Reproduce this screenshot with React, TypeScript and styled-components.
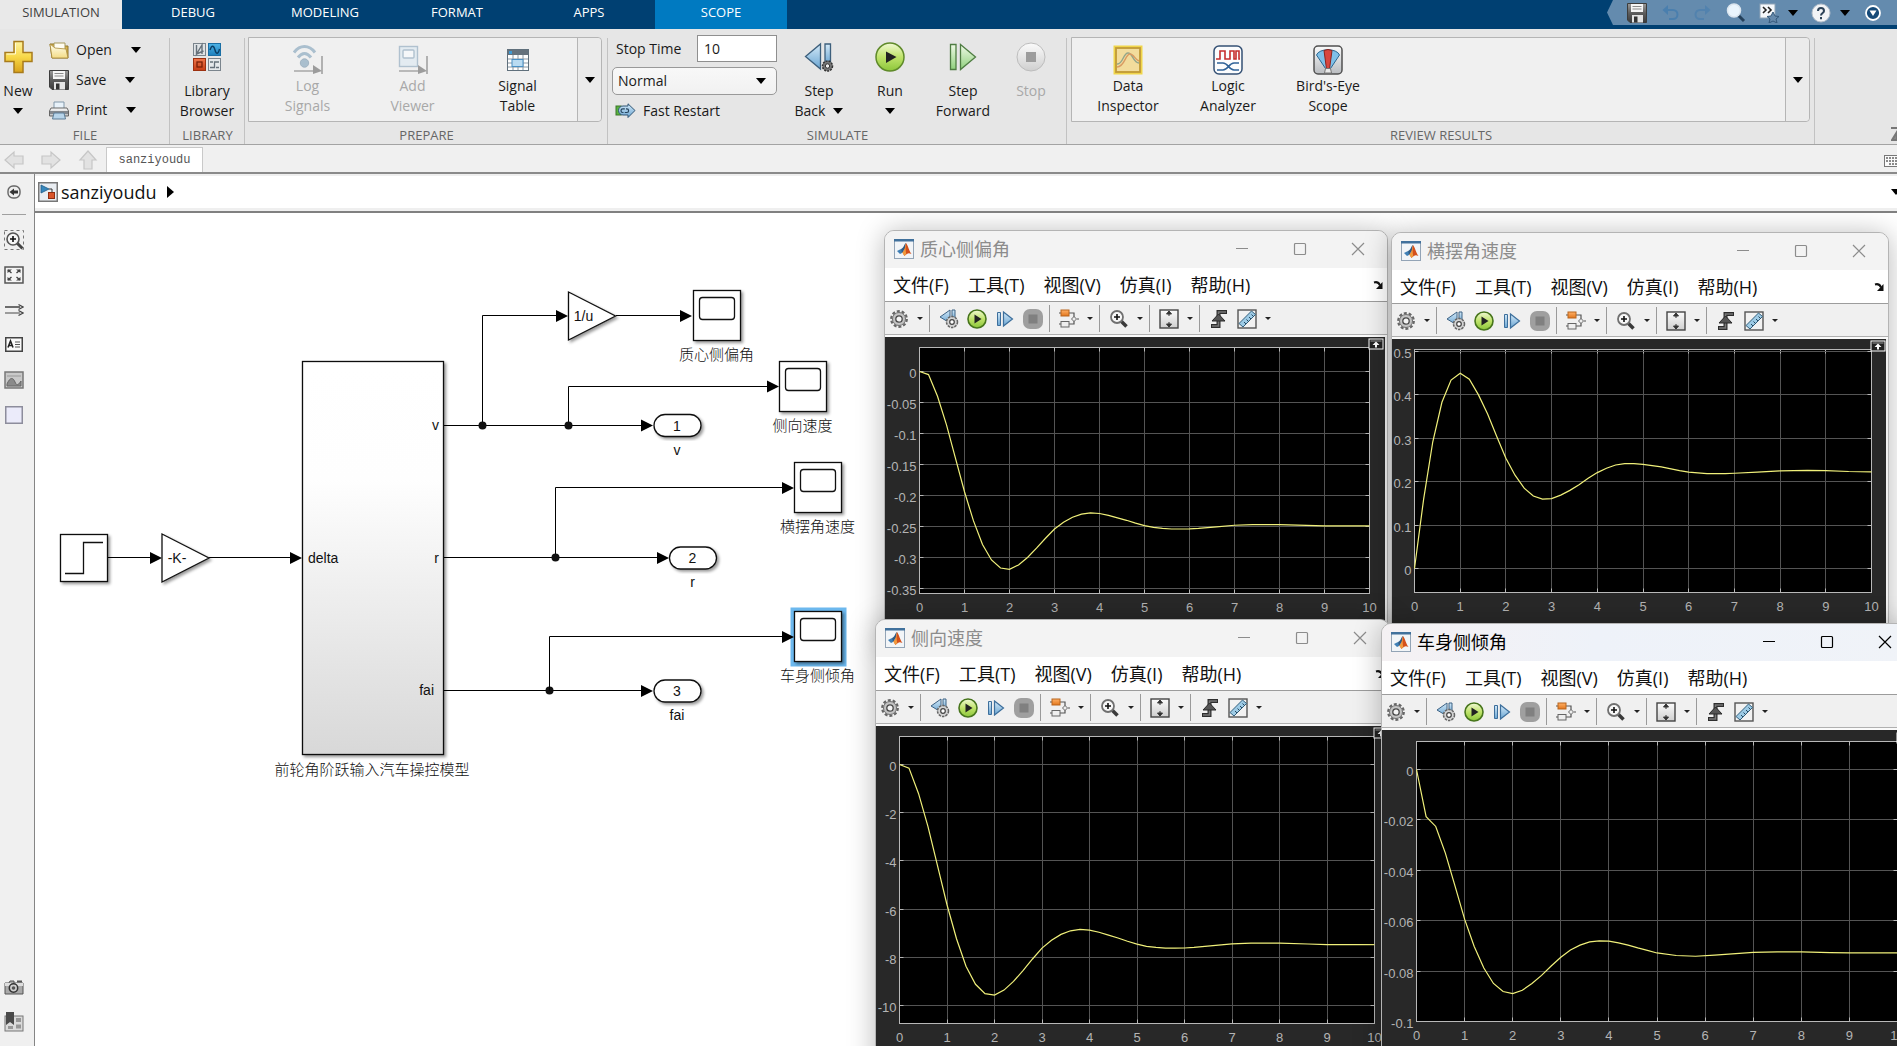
import React from 'react';
import styled, { createGlobalStyle } from 'styled-components';

const uiFont = '"Open Sans", "Noto Sans CJK SC", sans-serif';
const plotFont = '"Liberation Sans", Arial, sans-serif';

const GlobalStyle = createGlobalStyle`
  *, *::before, *::after { box-sizing: border-box; }
  body { margin: 0; background: #fff; overflow: hidden; font-family: ${uiFont}; }
  button, input, select { font: inherit; color: inherit; }
  button { margin: 0; padding: 0; border: 0; background: none; cursor: pointer; }
  svg { display: block; flex: none; }
`;

/* ---------- shared bits ---------- */

const Page = styled.div`
  height: 100vh;
  display: flex;
  flex-direction: column;
  overflow: hidden;
  color: #1a1a1a;
  font-size: 14px;
  line-height: 20px;
`;

const CaretShape = styled.svg`
  width: 10px;
  height: 6px;
  fill: #000;
`;
const Caret = () => (
  <CaretShape viewBox="0 0 10 6" aria-hidden>
    <path d="M0 0h10L5 6z" />
  </CaretShape>
);

const PaintDefs = styled.svg`
  position: absolute;
  width: 0;
  height: 0;
`;

type Stop = [string, string];
const gradients: Record<string, Stop[]> = {
  gold: [['0', '#fff3a0'], ['0.5', '#f7d848'], ['1', '#d9a21b']],
  paper: [['0', '#fffef0'], ['1', '#f3dc86']],
  steel: [['0', '#9a9a9a'], ['0.5', '#5d5d5d'], ['1', '#3b3b3b']],
  silver: [['0', '#fafafa'], ['1', '#b9bcc0']],
  green: [['0', '#f1f9d4'], ['0.5', '#bfe36a'], ['1', '#8cc63a']],
  mint: [['0', '#f0fae8'], ['1', '#8fd07c']],
  sky: [['0', '#d3e9f8'], ['1', '#6aa5d2']],
  azure: [['0', '#4fb4e6'], ['1', '#1b7fbd']],
  rust: [['0', '#f0764a'], ['1', '#c53c14']],
  fog: [['0', '#fbfbfb'], ['1', '#cfcfcf']],
  orange: [['0', '#ffb066'], ['1', '#e2761c']],
  block: [['0', '#ffffff'], ['0.3', '#fefefe'], ['1', '#d8d8d8']],
};
const Paints = () => (
  <PaintDefs aria-hidden>
    <defs>
      {Object.entries(gradients).map(([id, stops]) => (
        <linearGradient id={id} key={id} x1="0" y1="0" x2="0" y2="1">
          {stops.map(([offset, color]) => (
            <stop key={offset} offset={offset} stopColor={color} />
          ))}
        </linearGradient>
      ))}
    </defs>
  </PaintDefs>
);

type IconProps = { w: number; h?: number; children: React.ReactNode };
const Icon = ({ w, h = w, children }: IconProps) => (
  <svg width={w} height={h} viewBox={`0 0 ${w} ${h}`} fill="none" aria-hidden>
    {children}
  </svg>
);

/* ---------- ribbon icons ---------- */

const PlusIcon = () => (
  <Icon w={30} h={34}>
    <path d="M11 1.500h9v11h9v9h-9v11h-9v-11H2v-9h9z" fill="url(#gold)" stroke="#a87b1c" strokeWidth="1.500" />
    <path d="M12.500 3v11h-9" stroke="#fffbd8" />
  </Icon>
);
const FolderIcon = () => (
  <Icon w={20} h={18}>
    <path d="M1 3h5l1 2h12v12H3z" fill="#d8b24a" stroke="#8e742c" />
    <path d="M5 2h11v12H5z" fill="#fffdf2" stroke="#a7995c" />
    <path d="M1 3l5 4 11 1 2 9H3z" fill="url(#paper)" stroke="#a98c3b" strokeWidth=".8" />
  </Icon>
);
const SaveIcon = () => (
  <Icon w={20}>
    <path d="M.5.5h19v19H3l-2.500-2.500z" fill="url(#steel)" stroke="#3c3c3c" />
    <path d="M4 1h12v8H4z" fill="#f5f5f5" />
    <path d="M5.500 3.500h9M5.500 6h9" stroke="#8b8b8b" />
    <path d="M5 12h11v7.500H5z" fill="#e4e4e4" />
    <path d="M7 13.500h3.500v6H7z" fill="#333" />
  </Icon>
);
const PrintIcon = () => (
  <Icon w={20} h={19}>
    <path d="M5 1h10v8H5z" fill="#e8f2fa" stroke="#8298aa" />
    <path d="M2 7h16l1.500 3v5H.5v-5z" fill="url(#silver)" stroke="#666" />
    <path d="M1 10h18v3H1z" fill="#83888e" />
    <path d="M5 12h10l1.500 6h-13z" fill="#b7d4ea" stroke="#5c7d97" />
  </Icon>
);
const LibraryIcon = () => (
  <Icon w={30}>
    <rect x="1.500" y="1.500" width="12" height="12" fill="#dfe3e6" stroke="#7b858d" />
    <path d="M4.500 3v9L10 3v9M4.500 12l7-3" stroke="#66717a" strokeWidth="1.400" />
    <rect x="16.500" y="1.500" width="12" height="12" fill="url(#azure)" stroke="#1a6fa5" />
    <path d="M18 8c2-6 4-4 5 0s3 5 4.500-1" stroke="#0a3f66" strokeWidth="1.400" />
    <rect x="1.500" y="16.500" width="12" height="12" fill="url(#rust)" stroke="#9c3010" />
    <rect x="5" y="20" width="5" height="5" stroke="#7a1f06" strokeWidth="1.300" />
    <rect x="16.500" y="16.500" width="12" height="12" fill="#e6e9eb" stroke="#7b858d" />
    <path d="M18 25.500h4.500v-5.500H27M18 20h3M24 25.500h3" stroke="#66717a" strokeWidth="1.300" />
  </Icon>
);
const LogSignalsIcon = () => (
  <Icon w={30}>
    <g opacity=".6">
      <path d="M1 7.500c6-8 15-8 21 0" stroke="#7d9fb8" strokeWidth="3" />
      <path d="M5 12.500c4-5.500 9-5.500 13 0" stroke="#7d9fb8" strokeWidth="3" />
      <circle cx="11.500" cy="18" r="4.200" fill="#7d9fb8" stroke="#6b8aa2" />
      <path d="M1 26h20" stroke="#777" strokeWidth="1.500" />
      <path d="M20 20l9 6-9 3z" fill="#666" />
      <path d="M29 11v18" stroke="#666" strokeWidth="1.500" />
    </g>
  </Icon>
);
const AddViewerIcon = () => (
  <Icon w={30}>
    <g opacity=".6">
      <rect x="1.500" y="1.500" width="18" height="20" fill="#dce9f3" stroke="#86a3ba" strokeWidth="1.400" />
      <rect x="5" y="5" width="11" height="8" rx="1" fill="#f9fcff" stroke="#86a3ba" strokeWidth="1.400" />
      <path d="M1 26h20" stroke="#777" strokeWidth="1.500" />
      <path d="M20 20l9 6-9 3z" fill="#666" />
      <path d="M29 11v18" stroke="#666" strokeWidth="1.500" />
    </g>
  </Icon>
);
const SignalTableIcon = () => (
  <Icon w={24}>
    <rect x="1.500" y="1.500" width="21" height="21" fill="#fff" stroke="#60707c" />
    <path d="M2 2h20v5H2z" fill="#65727d" />
    <rect x="3" y="3" width="3" height="3" fill="#3f9ad4" />
    <path d="M2 11h20M2 15h20M2 19h20M7 7v15M12 7v15M17 7v15" stroke="#8997a3" />
    <rect x="6" y="11.500" width="11" height="7" fill="#b9dbf2" stroke="#4a90c4" />
  </Icon>
);
const FastRestartIcon = () => (
  <Icon w={21} h={16}>
    <rect x="1" y="3" width="5" height="9" fill="#58b33e" stroke="#3a7428" />
    <path d="M8 3h5V.8L20 7.500l-7 7V12H8a4.500 4.500 0 010-9z" fill="url(#sky)" stroke="#2f5574" />
    <path d="M8.500 9.500h-.7a1.800 1.800 0 010-3.600h2M11 5.900h.8a1.800 1.800 0 010 3.600h-2" stroke="#24445e" strokeWidth="1.200" />
  </Icon>
);
const StepBackIcon = () => (
  <Icon w={30}>
    <path d="M16.500 2v25L1.500 14.500z" fill="url(#sky)" stroke="#3d5f7c" strokeWidth="1.300" />
    <path d="M21 2h5.500v20H21z" fill="url(#sky)" stroke="#3d5f7c" strokeWidth="1.300" />
    <circle cx="23.500" cy="24" r="5" fill="#777" stroke="#333" strokeWidth="1.500" strokeDasharray="2 1" />
    <circle cx="23.500" cy="24" r="2.200" fill="#eee" stroke="#333" />
  </Icon>
);
const RunIcon = () => (
  <Icon w={30}>
    <circle cx="15" cy="15" r="14" fill="url(#green)" stroke="#5f8a2a" strokeWidth="1.500" />
    <path d="M11 9.500l10.500 5.500L11 21z" fill="#222" />
  </Icon>
);
const StepForwardIcon = () => (
  <Icon w={30}>
    <path d="M2.500 2.500H8v25H2.500z" fill="url(#mint)" stroke="#4f7d43" strokeWidth="1.300" />
    <path d="M12.500 2.500l15 12.500-15 12.500z" fill="url(#mint)" stroke="#4f7d43" strokeWidth="1.300" />
  </Icon>
);
const StopIcon = () => (
  <Icon w={30}>
    <circle cx="15" cy="15" r="14" fill="url(#fog)" stroke="#bdbdbd" />
    <rect x="10" y="10" width="10" height="10" fill="#9c9c9c" />
  </Icon>
);
const InspectorIcon = () => (
  <Icon w={30}>
    <rect x="1.500" y="1.500" width="27" height="27" fill="#f2dc9c" stroke="#f0d54a" strokeWidth="2" />
    <rect x="3" y="3" width="24" height="24" stroke="#c09a35" strokeWidth="1.800" />
    <path d="M4 19c6 1 6-11 11-11s5 10 11 10" stroke="#93a58a" strokeWidth="1.400" />
    <path d="M4 22c8 0 8-13 13-13 4 0 5 6 9 7" stroke="#d99b62" strokeWidth="1.400" />
  </Icon>
);
const LogicIcon = () => (
  <Icon w={30}>
    <rect x="1" y="1" width="28" height="28" rx="5" fill="#fbfcfd" stroke="#345074" strokeWidth="1.500" />
    <path d="M3 14h4V6h5v8h5V6h4v8h2V6h3v8h1" stroke="#c62d2d" strokeWidth="1.600" />
    <path d="M4 18h6c5 0 6 7 11 7h5M4 25h6c5 0 6-7 11-7h5" stroke="#2f6298" strokeWidth="1.600" />
  </Icon>
);
const BirdsEyeIcon = () => (
  <Icon w={30}>
    <rect x="1" y="1" width="28" height="28" rx="4" fill="url(#silver)" stroke="#505050" strokeWidth="1.500" />
    <path d="M13.500 25L3.500 10C6 3 24 3 26.500 10l-10 15z" fill="#7fc0e8" stroke="#2b6791" />
    <path d="M13.500 24L11 5.500q4-2 8 0L16.500 24z" fill="#d8473f" stroke="#8b241d" />
    <path d="M11.500 28l1-4.500h5l1 4.500z" fill="#e9e9e9" stroke="#777" />
  </Icon>
);
const MagnifierIcon = () => (
  <Icon w={20}>
    <path d="M12 12l6 6" stroke="#24405a" strokeWidth="3" />
    <ellipse cx="8" cy="7.500" rx="6.500" ry="6.500" fill="#eaf5fd" stroke="#dbe5ee" strokeWidth="1.500" />
  </Icon>
);
const UndoIcon = ({ flip }: { flip?: boolean }) => (
  <Icon w={20}>
    <g transform={flip ? 'translate(20 0) scale(-1 1)' : undefined} opacity={flip ? 0.7 : 1}>
      <path d="M5 7h8a4 4 0 010 9H9" stroke="#4a7fae" strokeWidth="2" />
      <path d="M8 2L2.500 7 8 12z" fill="#4a7fae" />
    </g>
  </Icon>
);
const FavoritesIcon = () => (
  <Icon w={20}>
    <rect x="1" y="1" width="15" height="14" fill="#f4f7fa" stroke="#8ea3b5" />
    <path d="M4 4l3 3-3 3M9 4l3 3-3 3" stroke="#222" strokeWidth="1.600" />
    <path d="M14 9l2 4 4 .5-3 2.500 1 4-4-2-4 2 1-4-3-2.500 4-.5z" fill="#6589ab" stroke="#35597b" />
  </Icon>
);
const HelpIcon = () => (
  <Icon w={20}>
    <circle cx="10" cy="10" r="9" fill="#f2f4f6" stroke="#b3bfca" />
    <path d="M7 8a3 3 0 116 0c0 2-3 2-3 4.500M10 14v2.200" stroke="#2c4257" strokeWidth="2" />
  </Icon>
);
const MinimizeRibbonIcon = () => (
  <Icon w={20}>
    <circle cx="10" cy="10" r="7" fill="#164a78" stroke="#fff" strokeWidth="1.800" />
    <path d="M6.500 7.500h7L10 13z" fill="#fff" />
  </Icon>
);

/* ---------- title tabs ---------- */

const TabBar = styled.nav`
  flex: none;
  display: flex;
  height: 29px;
  background: #004072;
`;
const Tab = styled.button<{ $tone?: 'active' | 'context' }>`
  width: ${(p) => (p.$tone === 'active' ? '122px' : '132px')};
  margin-right: ${(p) => (p.$tone === 'active' ? '5px' : 0)};
  padding-bottom: 5px;
  font-size: 13px;
  color: ${(p) => (p.$tone === 'active' ? '#404040' : '#fff')};
  background: ${(p) => (p.$tone === 'active' ? '#e9e9e9' : p.$tone === 'context' ? '#007ac1' : 'transparent')};
`;
const QuickAccess = styled.div`
  display: flex;
  align-items: center;
  gap: 13px;
  width: 290px;
  height: 25px;
  margin-left: auto;
  padding-left: 20px;
  background: #648bae;
  clip-path: polygon(6px 0, 100% 0, 100% 100%, 6px 100%, 0 50%);
`;
const QuickButton = styled.button`
  display: flex;
  align-items: center;
  gap: 9px;
`;

/* ---------- ribbon ---------- */

const Ribbon = styled.header`
  flex: none;
  display: flex;
  height: 116px;
  background: #e6e6e6;
  border-bottom: 1px solid #a3a3a3;
`;
const Section = styled.section<{ $width?: number }>`
  display: flex;
  flex-direction: column;
  ${(p) => (p.$width ? `flex: none; width: ${p.$width}px;` : 'flex: 1; min-width: 0;')}
  background: linear-gradient(#c2c2c2, #c2c2c2) right bottom / 1px 106px no-repeat;
`;
const SectionBody = styled.div<{ $pad?: string }>`
  flex: 1;
  display: flex;
  padding: ${(p) => p.$pad ?? '0'};
`;
const SectionTitle = styled.h2`
  margin: 0;
  height: 17px;
  font-size: 13px;
  font-weight: 400;
  line-height: 17px;
  text-align: center;
  color: #666;
`;
const BigButton = styled.button<{ $width: number }>`
  width: ${(p) => p.$width}px;
  padding-top: 11px;
  display: flex;
  flex-direction: column;
  align-items: center;
  &:disabled { color: #a8a8a8; }
`;
const BigIcon = styled.span`
  display: flex;
  align-items: center;
  height: 34px;
  margin-bottom: 7px;
`;
const TextLine = styled.span`
  display: flex;
  align-items: center;
  gap: 8px;
  height: 20px;
  white-space: nowrap;
`;
const Rows = styled.div`
  padding: 6px 0 0 13px;
`;
const SmallButton = styled.button`
  display: flex;
  align-items: center;
  height: 30px;
`;
const SmallLabel = styled.span`
  margin: 0 19px 0 7px;
`;
const Gallery = styled.div`
  flex: 1;
  display: flex;
  height: 85px;
  border: 1px solid #b5b5b5;
  border-radius: 0 4px 4px 0;
  background: #f0f0f0;
`;
const GalleryItems = styled.div`
  flex: 1;
  display: flex;
  padding-left: 6px;
`;
const GalleryItem = styled.button<{ $width: number }>`
  width: ${(p) => p.$width}px;
  padding-top: 6px;
  display: flex;
  flex-direction: column;
  align-items: center;
  &:disabled { color: #a8a8a8; }
`;
const GalleryIcon = styled.span`
  display: flex;
  align-items: center;
  height: 31px;
  margin-bottom: 1px;
`;
const GalleryMore = styled.button`
  display: flex;
  align-items: center;
  justify-content: center;
  width: 24px;
  border-left: 1px solid #b5b5b5;
  background: #ebebeb;
  border-radius: 0 4px 4px 0;
`;
const SimulateForm = styled.div`
  display: flex;
  flex-direction: column;
  gap: 5px;
  width: 165px;
  margin-right: 7px;
  padding-top: 6px;
`;
const StopTimeRow = styled.label`
  display: flex;
  align-items: center;
  justify-content: space-between;
  padding-left: 4px;
`;
const StopTimeInput = styled.input`
  width: 80px;
  height: 27px;
  padding: 0 6px;
  border: 1px solid #8f8f8f;
  background: #fff;
`;
const ModeBox = styled.div`
  display: grid;
  align-items: center;
  & > * { grid-area: 1 / 1; }
  & > svg { justify-self: end; margin-right: 11px; pointer-events: none; }
`;
const ModeSelect = styled.select`
  appearance: none;
  width: 100%;
  height: 28px;
  padding: 0 5px;
  border: 1px solid #999;
  border-radius: 5px;
  background: linear-gradient(#f8f8f8, #f1f1f1);
`;
const FastRestart = styled.button`
  display: flex;
  align-items: center;
  gap: 7px;
  height: 22px;
  padding-left: 3px;
`;
const RibbonEnd = styled.div`
  flex: none;
  display: flex;
  align-items: flex-end;
  justify-content: flex-end;
  width: 82px;
  padding-bottom: 2px;
  overflow: hidden;
`;

/* ---------- document bar ---------- */

const DocumentBar = styled.div`
  flex: none;
  display: flex;
  align-items: flex-end;
  height: 29px;
  background: #f0f0f0;
  border-bottom: 2px solid #8a8a8a;
`;
const NavArrows = styled.div`
  display: flex;
  gap: 17px;
  align-items: center;
  width: 106px;
  height: 24px;
  padding-left: 4px;
`;
const DocumentTab = styled.button`
  width: 97px;
  height: 25px;
  border: 1px solid #c9c9c9;
  border-bottom: 0;
  background: #fff;
  font-family: "Liberation Mono", monospace;
  font-size: 12px;
  color: #555;
`;
const KeyboardButton = styled.button`
  width: 13px;
  height: 22px;
  margin-left: auto;
  overflow: hidden;
`;

/* ---------- workspace ---------- */

const Workspace = styled.div`
  flex: 1;
  display: flex;
  min-height: 0;
`;
const Palette = styled.aside`
  flex: none;
  display: flex;
  flex-direction: column;
  align-items: flex-start;
  width: 35px;
  padding-bottom: 7px;
  background: #f0f0f0;
  border-right: 1px solid #858585;
`;
const PaletteButton = styled.button`
  display: flex;
  align-items: center;
  justify-content: center;
  width: 28px;
  height: 35px;
`;
const PaletteRule = styled.hr`
  width: 24px;
  margin: 5px 0 7px 2px;
  border: 0;
  border-top: 1px solid #a0a0a0;
`;
const PaletteSpace = styled.div`
  flex: 1;
`;
const Editor = styled.main`
  flex: 1;
  min-width: 0;
  display: flex;
  flex-direction: column;
`;
const Breadcrumb = styled.div`
  flex: none;
  display: flex;
  align-items: center;
  height: 39px;
  padding: 0 0 4px 3px;
  border-top: 2px solid #efefef;
  border-bottom: 2px solid #808080;
  box-shadow: inset 0 -3px #efefef;
  background: #fff;
`;
const Crumb = styled.button`
  margin: 0 10px 0 3px;
  font-size: 18px;
  line-height: 24px;
  color: #111;
`;
const CrumbMenu = styled.button`
  width: 6px;
  margin-left: auto;
  overflow: hidden;
`;
const Canvas = styled.div`
  flex: 1;
  position: relative;
  overflow: hidden;
  background: #fff;
`;
const Diagram = styled.svg`
  width: 100%;
  height: 100%;
  font-family: ${plotFont};
  font-size: 14px;
  text-anchor: middle;
  fill: #111;
`;

/* ---------- block diagram ---------- */

const BLOCK = { fill: '#fff', stroke: '#111', strokeWidth: 1.3 };

const ScopeBlock = ({ x, y, name, selected }: { x: number; y: number; name: string; selected?: boolean }) => (
  <g>
    {selected && <rect x={x - 4} y={y - 4} width="56" height="59" fill="#6cb8ee" />}
    <rect x={x} y={y} width="47" height="50" {...BLOCK} filter="url(#lift)" />
    <rect x={x + 6} y={y + 7} width="35" height="22" rx="3" {...BLOCK} />
    <text x={x + 23} y={y + 69} fontSize="15" fontFamily='"Noto Sans CJK SC", sans-serif' fontWeight="300">
      {name}
    </text>
  </g>
);
const OutPort = ({ x, y, n, name }: { x: number; y: number; n: number; name: string }) => (
  <g>
    <rect x={x} y={y - 11} width="47" height="22" rx="11" {...BLOCK} filter="url(#lift)" />
    <text x={x + 23} y={y + 5}>{n}</text>
    <text x={x + 23} y={y + 29}>{name}</text>
  </g>
);
const Gain = ({ x, y, value }: { x: number; y: number; value: string }) => (
  <g>
    <path d={`M${x} ${y - 24}l47 24l-47 24z`} {...BLOCK} filter="url(#lift)" />
    <text x={x + 15} y={y + 5}>{value}</text>
  </g>
);
const Wire = ({ d, tip }: { d: string; tip: [number, number] }) => (
  <g>
    <path d={d} fill="none" stroke="#000" />
    <path d={`M${tip[0]} ${tip[1]}l-12 -6v12z`} fill="#000" />
  </g>
);

const Model = () => (
  <Diagram aria-label="sanziyoudu">
    <defs>
      <filter id="lift" x="-10%" y="-10%" width="130%" height="130%">
        <feDropShadow dx="2" dy="2" stdDeviation="1.500" floodOpacity=".4" />
      </filter>
    </defs>
    <g transform="translate(-35 -213)">
      <Wire d="M108 557.500H152" tip={[162, 558]} />
      <Wire d="M209 557.500H292" tip={[302, 558]} />
      <Wire d="M444 425.500H643" tip={[653, 425.5]} />
      <Wire d="M482.500 425.500V315.500H558" tip={[568, 316]} />
      <Wire d="M616 315.500H683" tip={[692, 316]} />
      <Wire d="M568.500 425.500V386.500H768" tip={[779, 386.5]} />
      <Wire d="M444 557.500H659" tip={[669, 558]} />
      <Wire d="M555.500 557.500V487.500H784" tip={[794, 488]} />
      <Wire d="M444 690.500H643" tip={[653, 691]} />
      <circle cx="482.500" cy="425.500" r="4" />
      <circle cx="568.500" cy="425.500" r="4" />
      <circle cx="555.500" cy="557.500" r="4" />
      <circle cx="549.500" cy="690.500" r="4" />

      <rect x="60.500" y="534.500" width="47" height="47" {...BLOCK} filter="url(#lift)" />
      <path d="M65 573.500H83.500V542.500H103" fill="none" stroke="#111" strokeWidth="1.300" />
      <Gain x={162} y={558} value="-K-" />
      <Gain x={568.5} y={316} value="1/u" />

      <rect x="302.500" y="361.500" width="141" height="393" {...BLOCK} fill="url(#block)" filter="url(#lift)" />
      <text x="308" y="563" textAnchor="start">delta</text>
      <text x="439" y="430" textAnchor="end">v</text>
      <text x="439" y="563" textAnchor="end">r</text>
      <text x="434" y="695" textAnchor="end">fai</text>
      <text x="372" y="775" fontSize="15" fontFamily='"Noto Sans CJK SC", sans-serif' fontWeight="300">
        前轮角阶跃输入汽车操控模型
      </text>

      <ScopeBlock x={693.5} y={290.5} name="质心侧偏角" />
      <ScopeBlock x={779.5} y={361.5} name="侧向速度" />
      <ScopeBlock x={794.5} y={462.5} name="横摆角速度" />
      <ScopeBlock x={794.5} y={611.5} name="车身侧倾角" selected />
      <Wire d="M549.500 690.500V636.500H784" tip={[794, 637]} />
      <OutPort x={654} y={425.5} n={1} name="v" />
      <OutPort x={669.5} y={558} n={2} name="r" />
      <OutPort x={654} y={691} n={3} name="fai" />
    </g>
  </Diagram>
);

/* ---------- scope windows ---------- */

const Frame = styled.article<{ $x: number; $y: number; $w: number; $h: number }>`
  position: absolute;
  left: ${(p) => p.$x}px;
  top: ${(p) => p.$y}px;
  width: ${(p) => p.$w}px;
  height: ${(p) => p.$h}px;
  display: flex;
  flex-direction: column;
  overflow: hidden;
  border: 1px solid #b4b4b4;
  border-radius: 10px 10px 0 0;
  background: #f0f0f0;
  box-shadow: 0 2px 28px rgba(0, 0, 0, 0.28);
`;
const TitleBar = styled.header<{ $active?: boolean }>`
  flex: none;
  display: flex;
  align-items: center;
  height: 37px;
  padding: 0 0 2px 9px;
  color: ${(p) => (p.$active ? '#000' : '#8c8c8c')};
  background: ${(p) => (p.$active ? 'linear-gradient(90deg, #f5f1f3, #eef2f9 40%, #f0f3f8)' : '#f3f3f3')};
`;
const TitleText = styled.h3`
  flex: 1;
  margin: 0 0 0 6px;
  font-size: 18px;
  font-weight: 400;
`;
const WindowButton = styled.button`
  display: flex;
  align-items: center;
  justify-content: center;
  width: 58px;
  height: 35px;
`;
const MenuBar = styled.nav`
  flex: none;
  display: flex;
  align-items: center;
  gap: 19px;
  height: 33px;
  padding: 0 4px 0 8px;
  background: #fff;
  font-size: 18px;
  color: #111;
`;
const MenuItem = styled.button`
  white-space: nowrap;
`;
const DockButton = styled.button`
  margin-left: auto;
`;
const ScopeTools = styled.div`
  flex: none;
  display: flex;
  align-items: center;
  height: 36px;
  border-top: 1px solid #9c9c9c;
  border-bottom: 2px solid #fafafa;
  box-shadow: inset 0 -1px #b0b0b0;
  background: #f0f0f0;
`;
const ToolButton = styled.button`
  display: flex;
  align-items: center;
  justify-content: center;
  width: 28px;
  height: 28px;
`;
const ToolCaret = styled.button`
  display: flex;
  align-items: center;
  justify-content: center;
  width: 14px;
  height: 28px;
`;
const ToolRule = styled.span`
  width: 1px;
  height: 27px;
  margin: 0 5px 0 2px;
  background: #9a9a9a;
`;
const PlotArea = styled.div`
  flex: 1;
  min-height: 0;
  margin-right: 2px;
  background: #282828;
`;
const Plot = styled.svg`
  width: 100%;
  height: 100%;
  overflow: hidden;
  font-family: ${plotFont};
  font-size: 13px;
  fill: #b4b4b4;
`;

const MatlabIcon = () => (
  <Icon w={20}>
    <rect x=".5" y=".5" width="19" height="19" fill="#f2f5f8" stroke="#93a4b6" />
    <path d="M0 0h20v2.500H0z" fill="#41719c" />
    <path d="M3 12l4-2 3 3-4 2z" fill="#3f7fb5" />
    <path d="M7 10c3-1 3-5 5-6l-1 6-3 3.500z" fill="#2e5b85" />
    <path d="M12 4c2 2 3 8 5.500 11-3-1.500-4-1-7 2l-2-3.500C11 12 11 7 12 4z" fill="#d4501b" />
    <path d="M12 4c-.5 5-.5 8 .3 11l-2 2-2-3.500C11 12 11 7 12 4z" fill="#f09a3e" />
  </Icon>
);
const GearIcon = () => (
  <Icon w={20}>
    <circle cx="10" cy="10" r="7.800" stroke="#666" strokeWidth="2.200" strokeDasharray="3 1.900" />
    <circle cx="10" cy="10" r="6.500" fill="#c4c4c4" stroke="#6d6d6d" />
    <circle cx="10" cy="10" r="3.200" fill="#f4f4f4" stroke="#4a4a4a" strokeWidth="1.300" />
  </Icon>
);
const BackGearIcon = () => (
  <Icon w={20}>
    <path d="M11 1v13L1 8z" fill="url(#sky)" stroke="#3d6284" />
    <path d="M13 1h3v10h-3z" fill="url(#sky)" stroke="#3d6284" />
    <circle cx="13" cy="13" r="5.500" fill="#d4d4d4" stroke="#666" strokeWidth="1.500" strokeDasharray="2.500 1" />
    <circle cx="13" cy="13" r="2.300" fill="#fff" stroke="#444" strokeWidth="1.200" />
  </Icon>
);
const PlayIcon = () => (
  <Icon w={20}>
    <circle cx="10" cy="10" r="9" fill="url(#green)" stroke="#47751c" strokeWidth="1.600" />
    <path d="M7.500 5.500l7 4.500-7 4.500z" fill="#222" />
  </Icon>
);
const ForwardIcon = () => (
  <Icon w={18}>
    <path d="M1.500 2.500h3v13h-3z" fill="url(#sky)" stroke="#3d6f9c" />
    <path d="M7.500 2l9 7-9 7z" fill="url(#sky)" stroke="#3d6f9c" strokeWidth="1.200" />
  </Icon>
);
const HaltIcon = () => (
  <Icon w={20}>
    <rect width="20" height="20" rx="7" fill="#9f9f9f" />
    <rect x="5.500" y="5.500" width="9" height="9" fill="#808080" />
  </Icon>
);
const BlocksIcon = () => (
  <Icon w={20}>
    <path d="M0 4h2M10 4h5v4M0 15h2M10 15h5v-3M18 10h2" stroke="#555" strokeWidth="1.200" />
    <rect x="2" y="1" width="8" height="6" fill="url(#orange)" stroke="#b8641c" />
    <rect x="2" y="12.500" width="8" height="5.500" fill="#eee" stroke="#666" />
    <path d="M15 7.500l2.500 2.500-2.500 2.500-2.500-2.500z" fill="#eee" stroke="#666" />
  </Icon>
);
const ZoomPlusIcon = () => (
  <Icon w={20}>
    <path d="M12 12l5.500 5.500" stroke="#3a3a3a" strokeWidth="3.500" />
    <circle cx="8" cy="8" r="6" fill="#f7f7f7" stroke="#707070" strokeWidth="1.800" />
    <path d="M8 5v6M5 8h6" stroke="#111" strokeWidth="1.600" />
  </Icon>
);
const FitAxesIcon = () => (
  <Icon w={20}>
    <rect x="1" y="1" width="18" height="18" fill="url(#fog)" stroke="#444" strokeWidth="1.400" />
    <path d="M10 2l2.500 3h-5zM10 18l2.500-3h-5zM10 5v2M10 13v2" fill="#333" stroke="#333" />
  </Icon>
);
const TriggerIcon = () => (
  <Icon w={20}>
    <path d="M2 17h7.500V3H18" stroke="#2e2e2e" strokeWidth="4" />
    <path d="M3 17h6.500V3H17" stroke="#777" strokeWidth="1.600" />
    <path d="M9.500 5l6.500 7H3z" fill="#555" stroke="#2a2a2a" />
  </Icon>
);
const MeasureIcon = () => (
  <Icon w={20}>
    <rect x="1" y="1" width="18" height="18" fill="#f2f2f2" stroke="#555" strokeWidth="1.400" />
    <path d="M2 14.500L14.500 2 18.500 5.500 6 18z" fill="#9dcbe6" stroke="#335f7c" />
    <path d="M7 13l2 2M9.500 10.500l2 2M12 8l2 2M14.500 5.500l2 2" stroke="#274a61" />
  </Icon>
);
const SmallCaret = () => (
  <Icon w={6} h={3}>
    <path d="M0 0h6L3 3z" fill="#222" />
  </Icon>
);

type Point = [number, number];
const sideslip: Point[] = [
  [0, 0], [0.2, -0.005], [0.4, -0.04], [0.6, -0.086], [0.8, -0.14], [1, -0.194], [1.2, -0.241], [1.4, -0.279],
  [1.6, -0.304], [1.8, -0.317], [2, -0.319], [2.2, -0.312], [2.4, -0.3], [2.6, -0.285], [2.8, -0.269], [3, -0.254],
  [3.2, -0.243], [3.4, -0.235], [3.6, -0.23], [3.8, -0.228], [4, -0.229], [4.2, -0.232], [4.4, -0.236], [4.6, -0.24],
  [4.8, -0.2445], [5, -0.2485], [5.2, -0.2515], [5.4, -0.253], [5.6, -0.254], [5.8, -0.254], [6, -0.2538],
  [6.2, -0.253], [6.6, -0.2505], [7, -0.248], [7.4, -0.247], [8, -0.247], [8.6, -0.2483], [9, -0.249], [10, -0.249],
];
const lateral: Point[] = sideslip.map(([t, v]) => [t, v * 30]);
const yaw: Point[] = [
  [0, 0], [0.2, 0.16], [0.4, 0.292], [0.6, 0.383], [0.8, 0.434], [1, 0.45], [1.2, 0.436], [1.4, 0.4], [1.6, 0.356],
  [1.8, 0.304], [2, 0.254], [2.2, 0.215], [2.4, 0.185], [2.6, 0.167], [2.8, 0.16], [3, 0.161], [3.2, 0.169],
  [3.4, 0.18], [3.6, 0.193], [3.8, 0.208], [4, 0.221], [4.2, 0.231], [4.4, 0.2385], [4.6, 0.2417], [4.8, 0.2417],
  [5, 0.24], [5.4, 0.234], [5.8, 0.2256], [6, 0.222], [6.4, 0.2187], [6.8, 0.2185], [7, 0.2195], [7.5, 0.222],
  [8, 0.2249], [8.6, 0.226], [9, 0.2256], [9.5, 0.2235], [10, 0.2226],
];
const roll: Point[] = [
  [0, 0], [0.2, -0.0187], [0.4, -0.0226], [0.6, -0.0332], [0.8, -0.0462], [1, -0.0594], [1.2, -0.0702],
  [1.4, -0.0788], [1.6, -0.0849], [1.8, -0.0881], [2, -0.0889], [2.2, -0.0876], [2.4, -0.0849], [2.6, -0.0817],
  [2.8, -0.078], [3, -0.0745], [3.2, -0.0716], [3.4, -0.0697], [3.6, -0.0684], [3.8, -0.068], [4, -0.0681],
  [4.2, -0.0688], [4.4, -0.0697], [4.6, -0.0708], [4.8, -0.0718], [5, -0.0728], [5.4, -0.0738], [5.8, -0.0741],
  [6.2, -0.0737], [7, -0.0726], [7.5, -0.0724], [8, -0.0724], [8.6, -0.0727], [9, -0.0728], [10, -0.0728],
];

type PlotSpec = {
  left: number;
  top: number;
  bottom: number;
  right: number;
  zeroY: number;
  stepY: number;
  unit: number;
  ticks: string[];
  data: Point[];
};

const ScopePlot = ({ left, top, right, bottom, zeroY, stepY, unit, ticks, data }: PlotSpec) => {
  const px = (t: number) => left + ((right - left) * t) / 10;
  const py = (v: number) => zeroY - (v / unit) * stepY;
  const snap = (n: number) => Math.round(n - 0.5) + 0.5;
  const times = Array.from({ length: 11 }, (_, i) => i);
  return (
    <Plot>
      <rect x={left} y={top} width={right - left} height={bottom - top} fill="#000" />
      {times.slice(1, 10).map((t) => (
        <g key={t}>
          <path d={`M${snap(px(t))} ${top}V${bottom}`} stroke="#545454" />
          <path d={`M${snap(px(t))} ${top}v4M${snap(px(t))} ${bottom}v-4`} stroke="#b8b8b8" />
        </g>
      ))}
      {ticks.map((label) => {
        const y = snap(py(Number(label)));
        return (
          <g key={label}>
            <path d={`M${left} ${y}H${right}`} stroke="#545454" />
            <path d={`M${left} ${y}h4M${right} ${y}h-4`} stroke="#b8b8b8" />
            <text x={left - 3} y={y + 6} textAnchor="end">{label}</text>
          </g>
        );
      })}
      <rect x={left} y={top} width={right - left} height={bottom - top} fill="none" stroke="#b8b8b8" />
      {times.map((t) => (
        <text key={t} x={px(t)} y={bottom + 18} textAnchor="middle">{t}</text>
      ))}
      <polyline points={data.map(([t, v]) => `${px(t)},${py(v)}`).join(' ')} fill="none" stroke="#f0f07a" strokeWidth="1.200" />
      <g transform={`translate(${right - 1} ${top - 9})`}>
        <rect x=".5" y=".5" width="14" height="10" fill="#222" stroke="#fff" />
        <path d="M2 2.500h11" stroke="#999" />
        <path d="M7.500 3l3.500 3.500H8.500V9h-2V6.500H4z" fill="#fff" />
      </g>
    </Plot>
  );
};

const menus = ['文件(F)', '工具(T)', '视图(V)', '仿真(I)', '帮助(H)'];

type WindowProps = { title: string; x: number; y: number; w: number; h: number; active?: boolean; plot: PlotSpec };
const ScopeWindow = ({ title, x, y, w, h, active, plot }: WindowProps) => (
  <Frame $x={x} $y={y} $w={w} $h={h}>
    <TitleBar $active={active}>
      <MatlabIcon />
      <TitleText>{title}</TitleText>
      <WindowButton aria-label="最小化">
        <Icon w={14}><path d="M1 6.500h12" stroke="currentColor" /></Icon>
      </WindowButton>
      <WindowButton aria-label="最大化">
        <Icon w={14}><rect x="1.500" y="1.500" width="11" height="11" rx="1" stroke="currentColor" strokeWidth="1.200" /></Icon>
      </WindowButton>
      <WindowButton aria-label="关闭">
        <Icon w={14}><path d="M1 1l12 12M13 1L1 13" stroke="currentColor" strokeWidth="1.200" /></Icon>
      </WindowButton>
    </TitleBar>
    <MenuBar>
      {menus.map((m) => <MenuItem key={m}>{m}</MenuItem>)}
      <DockButton aria-label="停靠">
        <Icon w={10}><path d="M1 2.500c3-1 5 0 6 3" stroke="#111" strokeWidth="2" /><path d="M9.500 2v7H3z" fill="#111" /></Icon>
      </DockButton>
    </MenuBar>
    <ScopeTools>
      <ToolButton aria-label="设置"><GearIcon /></ToolButton>
      <ToolCaret aria-label="更多设置"><SmallCaret /></ToolCaret>
      <ToolRule />
      <ToolButton aria-label="步退"><BackGearIcon /></ToolButton>
      <ToolButton aria-label="运行"><PlayIcon /></ToolButton>
      <ToolButton aria-label="步进"><ForwardIcon /></ToolButton>
      <ToolButton aria-label="停止"><HaltIcon /></ToolButton>
      <ToolRule />
      <ToolButton aria-label="信号选择"><BlocksIcon /></ToolButton>
      <ToolCaret aria-label="更多信号"><SmallCaret /></ToolCaret>
      <ToolRule />
      <ToolButton aria-label="缩放"><ZoomPlusIcon /></ToolButton>
      <ToolCaret aria-label="更多缩放"><SmallCaret /></ToolCaret>
      <ToolRule />
      <ToolButton aria-label="适应坐标轴"><FitAxesIcon /></ToolButton>
      <ToolCaret aria-label="更多适应"><SmallCaret /></ToolCaret>
      <ToolRule />
      <ToolButton aria-label="触发器"><TriggerIcon /></ToolButton>
      <ToolButton aria-label="测量"><MeasureIcon /></ToolButton>
      <ToolCaret aria-label="更多测量"><SmallCaret /></ToolCaret>
    </ScopeTools>
    <PlotArea>
      <ScopePlot {...plot} />
    </PlotArea>
  </Frame>
);

const windows: WindowProps[] = [
  {
    title: '质心侧偏角', x: 849, y: 17, w: 504, h: 420,
    plot: {
      left: 34.5, right: 484.5, top: 10.5, bottom: 256.5, zeroY: 34.5, stepY: 31, unit: 0.05, data: sideslip,
      ticks: ['0', '-0.05', '-0.1', '-0.15', '-0.2', '-0.25', '-0.3', '-0.35'],
    },
  },
  {
    title: '横摆角速度', x: 1356, y: 19, w: 498, h: 400,
    plot: {
      left: 22.5, right: 479.5, top: 10.5, bottom: 253.5, zeroY: 229.5, stepY: 43.4, unit: 0.1, data: yaw,
      ticks: ['0.5', '0.4', '0.3', '0.2', '0.1', '0'],
    },
  },
  {
    title: '侧向速度', x: 840, y: 406, w: 515, h: 480,
    plot: {
      left: 23.5, right: 498.5, top: 10.5, bottom: 297.5, zeroY: 38.5, stepY: 48.2, unit: 2, data: lateral,
      ticks: ['0', '-2', '-4', '-6', '-8', '-10'],
    },
  },
  {
    title: '车身侧倾角', x: 1346, y: 410, w: 534, h: 480, active: true,
    plot: {
      left: 34.5, right: 515.5, top: 11.5, bottom: 291.5, zeroY: 39.5, stepY: 50.4, unit: 0.02, data: roll,
      ticks: ['0', '-0.02', '-0.04', '-0.06', '-0.08', '-0.1'],
    },
  },
];

/* ---------- palette and navigation icons ---------- */

const NavArrow = ({ turn }: { turn: number }) => (
  <Icon w={20}>
    <path
      d="M1 10L10 2v4h9v8h-9v4z"
      fill="#e2e2e2"
      stroke="#c6c6c6"
      strokeWidth="1.200"
      transform={`rotate(${turn} 10 10)`}
    />
  </Icon>
);
const HideIcon = () => (
  <Icon w={14}>
    <rect x="1" y="1" width="12" height="12" rx="5" fill="#eee" stroke="#666" strokeWidth="1.400" />
    <path d="M2.500 7L7 3.500v2h4v3H7v2z" fill="#333" />
  </Icon>
);
const ZoomRegionIcon = () => (
  <Icon w={20}>
    <rect x=".5" y=".5" width="19" height="19" stroke="#777" strokeDasharray="3 3" />
    <path d="M13 13l5.500 5.500" stroke="#444" strokeWidth="3" />
    <circle cx="9" cy="9" r="6" fill="#f6f6f6" stroke="#555" strokeWidth="1.600" />
    <path d="M9 6v6M6 9h6" stroke="#111" strokeWidth="1.600" />
  </Icon>
);
const FitIcon = () => (
  <Icon w={20} h={18}>
    <rect x="1" y="1" width="18" height="16" fill="#f4f4f4" stroke="#555" strokeWidth="1.500" />
    <path d="M3.500 7V3.500H8zM16.500 7V3.500H12zM3.500 11v3.500H8zM16.500 11v3.500H12z" fill="#444" />
    <path d="M4 4l3.500 3M16 4l-3.500 3M4 14l3.500-3M16 14l-3.500-3" stroke="#444" strokeWidth="1.400" />
  </Icon>
);
const SignalsIcon = () => (
  <Icon w={20} h={14}>
    <path d="M1 4h15" stroke="#333" strokeWidth="1.400" />
    <path d="M1 10h15" stroke="#777" strokeWidth="1.400" />
    <path d="M14.500 1.500L19 4l-4.500 2.500M14.500 7.500L19 10l-4.500 2.500" stroke="#444" strokeWidth="1.300" />
  </Icon>
);
const AnnotationIcon = () => (
  <Icon w={18} h={15}>
    <rect x=".75" y=".75" width="16.500" height="13.500" fill="#fafafa" stroke="#444" strokeWidth="1.500" />
    <path d="M3 10.500L5.500 4 8 10.500M4 8.500h3" stroke="#222" strokeWidth="1.600" />
    <path d="M10 5h5M10 7.500h5M10 10h5" stroke="#555" />
  </Icon>
);
const ImageIcon = () => (
  <Icon w={20} h={18}>
    <rect x="1" y="1" width="18" height="16" fill="#c9c9c9" stroke="#777" strokeWidth="1.500" />
    <path d="M3 5h14" stroke="#999" />
    <path d="M3 13c3-7 6-7 8-2s4 2 6-1v5H3z" fill="#8a8a8a" stroke="#666" />
  </Icon>
);
const AreaIcon = () => (
  <Icon w={18}>
    <rect x=".75" y=".75" width="16.500" height="16.500" fill="#ebebfa" stroke="#8d8d9c" strokeWidth="1.500" />
  </Icon>
);
const CameraIcon = () => (
  <Icon w={20} h={16}>
    <path d="M1 4h4l1-2h4v2h9v11H1z" fill="#a9a9a9" stroke="#555" />
    <path d="M1 4h18v3H1z" fill="#dedede" />
    <circle cx="9.500" cy="9" r="4.200" fill="#cfcfcf" stroke="#333" strokeWidth="1.500" />
    <circle cx="9.500" cy="9" r="1.800" fill="#555" />
    <path d="M13 1.500h5v2h-5z" fill="#555" />
  </Icon>
);
const BookmarkIcon = () => (
  <Icon w={20}>
    <rect x="1" y="4" width="18" height="15" fill="#dadada" stroke="#777" />
    <path d="M2 0h8v13l-4-3-4 3z" fill="#4a4a4a" />
    <path d="M12 6h5v4h-5zM12 12.500h5v4h-5zM4 14h5v3H4z" fill="#979797" />
  </Icon>
);
const ModelIcon = () => (
  <Icon w={20}>
    <rect x=".75" y=".75" width="18.500" height="18.500" fill="#e9edf2" stroke="#777" strokeWidth="1.500" />
    <path d="M3 3l8 4-8 4z" fill="#3787bd" stroke="#1f5a85" strokeWidth=".8" />
    <path d="M11 7h3v3" stroke="#333" />
    <rect x="10.500" y="10.500" width="6" height="6" fill="#d9542a" stroke="#8f2d10" />
  </Icon>
);

const fileRows = [
  { name: 'Open', icon: <FolderIcon /> },
  { name: 'Save', icon: <SaveIcon /> },
  { name: 'Print', icon: <PrintIcon /> },
];
const prepareItems = [
  { lines: ['Log', 'Signals'], icon: <LogSignalsIcon />, off: true },
  { lines: ['Add', 'Viewer'], icon: <AddViewerIcon />, off: true },
  { lines: ['Signal', 'Table'], icon: <SignalTableIcon />, off: false },
];
const reviewItems = [
  { lines: ['Data', 'Inspector'], icon: <InspectorIcon /> },
  { lines: ['Logic', 'Analyzer'], icon: <LogicIcon /> },
  { lines: ["Bird's-Eye", 'Scope'], icon: <BirdsEyeIcon /> },
];

export default function App() {
  return (
    <Page>
      <GlobalStyle />
      <Paints />
      <TabBar>
        <Tab $tone="active">SIMULATION</Tab>
        <Tab>DEBUG</Tab>
        <Tab>MODELING</Tab>
        <Tab>FORMAT</Tab>
        <Tab>APPS</Tab>
        <Tab $tone="context">SCOPE</Tab>
        <QuickAccess>
          <QuickButton aria-label="Save"><SaveIcon /></QuickButton>
          <QuickButton aria-label="Undo"><UndoIcon /></QuickButton>
          <QuickButton aria-label="Redo"><UndoIcon flip /></QuickButton>
          <QuickButton aria-label="Search"><MagnifierIcon /></QuickButton>
          <QuickButton aria-label="Favorites"><FavoritesIcon /><Caret /></QuickButton>
          <QuickButton aria-label="Help"><HelpIcon /><Caret /></QuickButton>
          <QuickButton aria-label="Minimize"><MinimizeRibbonIcon /></QuickButton>
        </QuickAccess>
      </TabBar>

      <Ribbon>
        <Section $width={170}>
          <SectionBody>
            <BigButton $width={36}>
              <BigIcon><PlusIcon /></BigIcon>
              <TextLine>New</TextLine>
              <TextLine><Caret /></TextLine>
            </BigButton>
            <Rows>
              {fileRows.map((row) => (
                <SmallButton key={row.name}>
                  {row.icon}
                  <SmallLabel>{row.name}</SmallLabel>
                  <Caret />
                </SmallButton>
              ))}
            </Rows>
          </SectionBody>
          <SectionTitle>FILE</SectionTitle>
        </Section>
        <Section $width={75}>
          <SectionBody>
            <BigButton $width={74}>
              <BigIcon><LibraryIcon /></BigIcon>
              <TextLine>Library</TextLine>
              <TextLine>Browser</TextLine>
            </BigButton>
          </SectionBody>
          <SectionTitle>LIBRARY</SectionTitle>
        </Section>
        <Section $width={363}>
          <SectionBody $pad="8px 6px 0 3px">
            <Gallery>
              <GalleryItems>
                {prepareItems.map((item) => (
                  <GalleryItem $width={105} key={item.lines[0]} disabled={item.off}>
                    <GalleryIcon>{item.icon}</GalleryIcon>
                    {item.lines.map((line) => <TextLine key={line}>{line}</TextLine>)}
                  </GalleryItem>
                ))}
              </GalleryItems>
              <GalleryMore aria-label="More prepare tools"><Caret /></GalleryMore>
            </Gallery>
          </SectionBody>
          <SectionTitle>PREPARE</SectionTitle>
        </Section>
        <Section $width={459}>
          <SectionBody $pad="0 0 0 4px">
            <SimulateForm>
              <StopTimeRow>
                Stop Time
                <StopTimeInput defaultValue="10" />
              </StopTimeRow>
              <ModeBox>
                <ModeSelect aria-label="Simulation mode" defaultValue="Normal">
                  <option>Normal</option>
                </ModeSelect>
                <Caret />
              </ModeBox>
              <FastRestart><FastRestartIcon />Fast Restart</FastRestart>
            </SimulateForm>
            <BigButton $width={70}>
              <BigIcon><StepBackIcon /></BigIcon>
              <TextLine>Step</TextLine>
              <TextLine>Back <Caret /></TextLine>
            </BigButton>
            <BigButton $width={72}>
              <BigIcon><RunIcon /></BigIcon>
              <TextLine>Run</TextLine>
              <TextLine><Caret /></TextLine>
            </BigButton>
            <BigButton $width={74}>
              <BigIcon><StepForwardIcon /></BigIcon>
              <TextLine>Step</TextLine>
              <TextLine>Forward</TextLine>
            </BigButton>
            <BigButton $width={62} disabled>
              <BigIcon><StopIcon /></BigIcon>
              <TextLine>Stop</TextLine>
            </BigButton>
          </SectionBody>
          <SectionTitle>SIMULATE</SectionTitle>
        </Section>
        <Section>
          <SectionBody $pad="8px 5px 0 4px">
            <Gallery>
              <GalleryItems>
                {reviewItems.map((item) => (
                  <GalleryItem $width={100} key={item.lines[0]}>
                    <GalleryIcon>{item.icon}</GalleryIcon>
                    {item.lines.map((line) => <TextLine key={line}>{line}</TextLine>)}
                  </GalleryItem>
                ))}
              </GalleryItems>
              <GalleryMore aria-label="More review tools"><Caret /></GalleryMore>
            </Gallery>
          </SectionBody>
          <SectionTitle>REVIEW RESULTS</SectionTitle>
        </Section>
        <RibbonEnd>
          <Icon w={6} h={16}><path d="M0 2h6M1 14l5-8v8z" stroke="#777" strokeWidth="2" fill="#888" /></Icon>
        </RibbonEnd>
      </Ribbon>

      <DocumentBar>
        <NavArrows>
          <button aria-label="Back"><NavArrow turn={0} /></button>
          <button aria-label="Forward"><NavArrow turn={180} /></button>
          <button aria-label="Up"><NavArrow turn={90} /></button>
        </NavArrows>
        <DocumentTab>sanziyoudu</DocumentTab>
        <KeyboardButton aria-label="Keyboard">
          <Icon w={20} h={12}>
            <rect x=".5" y=".5" width="19" height="11" fill="#fafafa" stroke="#777" />
            <path d="M2 3h16M2 6h16M5 9h10" stroke="#666" strokeWidth="1.500" strokeDasharray="2 1" />
          </Icon>
        </KeyboardButton>
      </DocumentBar>

      <Workspace>
        <Palette>
          <PaletteButton aria-label="Hide explorer"><HideIcon /></PaletteButton>
          <PaletteRule />
          <PaletteButton aria-label="Zoom"><ZoomRegionIcon /></PaletteButton>
          <PaletteButton aria-label="Fit to view"><FitIcon /></PaletteButton>
          <PaletteButton aria-label="Signals"><SignalsIcon /></PaletteButton>
          <PaletteButton aria-label="Annotation"><AnnotationIcon /></PaletteButton>
          <PaletteButton aria-label="Image"><ImageIcon /></PaletteButton>
          <PaletteButton aria-label="Area"><AreaIcon /></PaletteButton>
          <PaletteSpace />
          <PaletteButton aria-label="Screenshot"><CameraIcon /></PaletteButton>
          <PaletteButton aria-label="Model browser"><BookmarkIcon /></PaletteButton>
        </Palette>
        <Editor>
          <Breadcrumb>
            <ModelIcon />
            <Crumb>sanziyoudu</Crumb>
            <Icon w={7} h={12}><path d="M0 0l7 6-7 6z" fill="#000" /></Icon>
            <CrumbMenu aria-label="Path menu"><Caret /></CrumbMenu>
          </Breadcrumb>
          <Canvas>
            <Model />
            {windows.map((win) => <ScopeWindow key={win.title} {...win} />)}
          </Canvas>
        </Editor>
      </Workspace>
    </Page>
  );
}
